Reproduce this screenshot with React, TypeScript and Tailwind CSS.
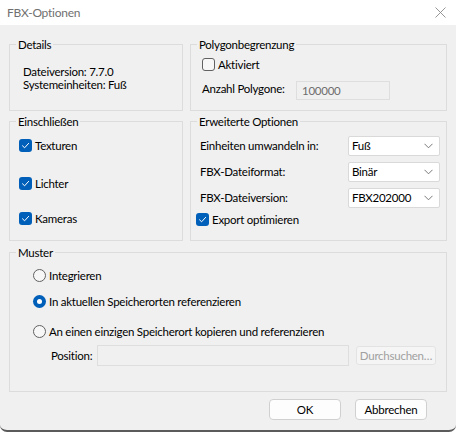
import React from 'react';

const Check: React.FC<{ checked?: boolean }> = ({ checked }) =>
  checked ? (
    <span className="w-[13px] h-[13px] rounded-[3px] bg-[#005fb8] flex items-center justify-center shrink-0">
      <svg width="9" height="9" viewBox="0 0 9 9" fill="none">
        <path d="M1.5 4.8 L3.6 6.8 L7.6 2.4" stroke="#ffffff" strokeWidth="1" strokeLinecap="round" strokeLinejoin="round" />
      </svg>
    </span>
  ) : (
    <span className="w-[13px] h-[13px] rounded-[3px] border border-[#616161] bg-[#f7f7f7] shrink-0" />
  );

const Radio: React.FC<{ checked?: boolean }> = ({ checked }) =>
  checked ? (
    <span className="w-[13px] h-[13px] rounded-full bg-[#005fb8] flex items-center justify-center shrink-0">
      <span className="w-[5px] h-[5px] rounded-full bg-white" />
    </span>
  ) : (
    <span className="w-[13px] h-[13px] rounded-full border border-[#616161] bg-[#f7f7f7] shrink-0" />
  );

const Select: React.FC<{ value: string }> = ({ value }) => (
  <div className="w-[92px] h-[20px] bg-white border border-[#d9d9d9] rounded-[2px] flex items-center justify-between pl-[3px] pr-[6px]">
    <span>{value}</span>
    <svg width="9" height="6" viewBox="0 0 9 6" fill="none">
      <path d="M0.5 0.8 L4.5 4.8 L8.5 0.8" stroke="#6b6b6b" strokeWidth="0.9" />
    </svg>
  </div>
);

const Group: React.FC<{ title: string; className: string; children?: React.ReactNode }> = ({
  title,
  className,
  children,
}) => (
  <fieldset className={`border border-[#dcdcdc] ${className}`}>
    <legend className="ml-[6px] px-[2px] leading-[15px]">{title}</legend>
    {children}
  </fieldset>
);

const Button: React.FC<{ label: string }> = ({ label }) => (
  <button className="w-[72px] h-[21px] bg-[#fdfdfd] border border-[#d0d0d0] rounded-[4px] leading-none">
    {label}
  </button>
);

export default function App() {
  return (
    <div
      className="w-[456px] h-[432px] flex flex-col bg-[#f0f0f0] text-[11.5px] tracking-[-0.25px] text-black border-b-[2px] border-[#5b5b5b] rounded-b-[7px] overflow-hidden whitespace-nowrap"
      style={{ fontFamily: 'Lato, "Noto Sans", sans-serif' }}
    >
      <div className="h-[25px] bg-white flex items-center justify-between pl-[7px] pr-[10px]">
        <span className="text-[#707070] text-[12px]">FBX-Optionen</span>
        <svg width="11" height="11" viewBox="0 0 11 11" fill="none">
          <path d="M0.5 0.5 L10.5 10.5 M10.5 0.5 L0.5 10.5" stroke="#8a8a8a" strokeWidth="0.9" />
        </svg>
      </div>

      <div className="flex flex-col px-[9px] pt-[12px]">
        <div className="flex gap-[7px]">
          <Group title="Details" className="w-[174px] h-[74px]">
            <div className="pl-[13px] pt-[13px] leading-[14px]">
              <div>Dateiversion: 7.7.0</div>
              <div className="-mt-[1px]">Systemeinheiten: Fuß</div>
            </div>
          </Group>
          <Group title="Polygonbegrenzung" className="w-[257px] h-[74px]">
            <div className="pl-[11px] pt-[5px] flex flex-col">
              <label className="h-[15px] flex items-center gap-[3px]">
                <Check />
                <span>Aktiviert</span>
              </label>
              <div className="flex items-center mt-[9px]">
                <span className="w-[94px] -mt-[3px]">Anzahl Polygone:</span>
                <div className="w-[94px] h-[19px] bg-[#f0f0f0] border border-[#dedede] flex items-center pl-[5px] text-[#6d6d6d]">
                  100000
                </div>
              </div>
            </div>
          </Group>
        </div>

        <div className="flex gap-[7px] mt-[3px]">
          <Group title="Einschließen" className="w-[174px] h-[127px]">
            <div className="pl-[9px] flex flex-col">
              <label className="h-[15px] mt-[9px] flex items-center gap-[3px]">
                <Check checked />
                <span>Texturen</span>
              </label>
              <label className="h-[15px] mt-[23px] flex items-center gap-[3px]">
                <Check checked />
                <span>Lichter</span>
              </label>
              <label className="h-[15px] mt-[20px] flex items-center gap-[3px]">
                <Check checked />
                <span>Kameras</span>
              </label>
            </div>
          </Group>
          <Group title="Erweiterte Optionen" className="w-[257px] h-[127px]">
            <div className="flex flex-col pl-[9px] pr-[6px] pt-[7px] gap-[6px]">
              <div className="flex items-center justify-between">
                <span>Einheiten umwandeln in:</span>
                <Select value="Fuß" />
              </div>
              <div className="flex items-center justify-between">
                <span>FBX-Dateiformat:</span>
                <Select value="Binär" />
              </div>
              <div className="flex items-center justify-between">
                <span>FBX-Dateiversion:</span>
                <Select value="FBX202000" />
              </div>
            </div>
            <label className="h-[15px] mt-[4px] pl-[5px] flex items-center gap-[3px]">
              <Check checked />
              <span>Export optimieren</span>
            </label>
          </Group>
        </div>

        <Group title="Muster" className="w-[438px] h-[147px] mt-[4px]">
          <div className="flex flex-col pl-[23px]">
            <label className="h-[15px] mt-[8px] flex items-center gap-[3px]">
              <Radio />
              <span>Integrieren</span>
            </label>
            <label className="h-[15px] mt-[11px] flex items-center gap-[3px]">
              <Radio checked />
              <span>In aktuellen Speicherorten referenzieren</span>
            </label>
            <label className="h-[15px] mt-[15px] flex items-center gap-[3px]">
              <Radio />
              <span>An einen einzigen Speicherort kopieren und referenzieren</span>
            </label>
            <div className="flex items-center mt-[6px] pl-[18px]">
              <span className="w-[46px]">Position:</span>
              <div className="w-[252px] h-[21px] bg-[#f0f0f0] border border-[#dedede]" />
              <button className="ml-[7px] w-[80px] h-[19px] bg-[#f5f5f5] border border-[#e3e3e3] rounded-[3px] text-[#a0a0a0] leading-none">
                Durchsuchen…
              </button>
            </div>
          </div>
        </Group>

        <div className="flex justify-end gap-[14px] mt-[7px] pr-[20px]">
          <Button label="OK" />
          <Button label="Abbrechen" />
        </div>
      </div>
    </div>
  );
}
